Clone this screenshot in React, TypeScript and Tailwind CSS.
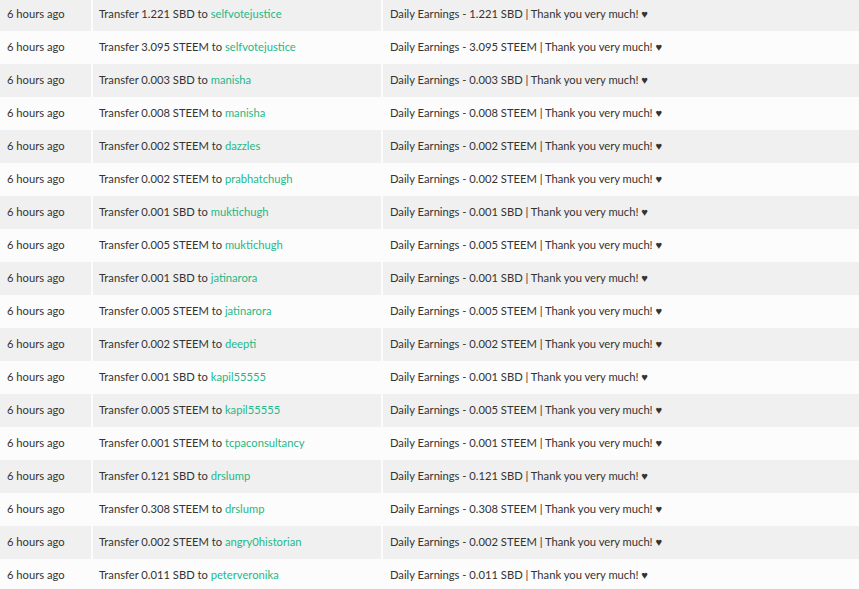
const rows: [string, string, string][] = [
  ["1.221", "SBD", "selfvotejustice"],
  ["3.095", "STEEM", "selfvotejustice"],
  ["0.003", "SBD", "manisha"],
  ["0.008", "STEEM", "manisha"],
  ["0.002", "STEEM", "dazzles"],
  ["0.002", "STEEM", "prabhatchugh"],
  ["0.001", "SBD", "muktichugh"],
  ["0.005", "STEEM", "muktichugh"],
  ["0.001", "SBD", "jatinarora"],
  ["0.005", "STEEM", "jatinarora"],
  ["0.002", "STEEM", "deepti"],
  ["0.001", "SBD", "kapil55555"],
  ["0.005", "STEEM", "kapil55555"],
  ["0.001", "STEEM", "tcpaconsultancy"],
  ["0.121", "SBD", "drslump"],
  ["0.308", "STEEM", "drslump"],
  ["0.002", "STEEM", "angry0historian"],
  ["0.011", "SBD", "peterveronika"],
];

export default function App() {
  return (
    <div className="w-[859px] h-[589px] overflow-hidden bg-[#fcfcfc] text-[#333] text-[11.2px]" style={{ fontFamily: '"Source Sans Pro", Lato, "Noto Sans", sans-serif' }}>
      <div className="-mt-[2px]">
        {rows.map(([amt, cur, to], i) => (
          <div key={i} className={`flex h-[33px] items-center ${i % 2 === 0 ? "bg-[#f0f0f0]" : "bg-[#fcfcfc]"}`}>
            <div className="w-[93px] h-full flex items-center pl-[7px] border-r-2 border-[#fcfcfc]">6 hours ago</div>
            <div className="w-[290px] h-full flex items-center pl-[6px] border-r-2 border-[#fcfcfc]">
              Transfer {amt} {cur} to&nbsp;<span className="text-[#1fb889]">{to}</span>
            </div>
            <div className="flex-1 h-full flex items-center pl-[7px]">
              Daily Earnings - {amt} {cur} | Thank you very much! ♥
            </div>
          </div>
        ))}
      </div>
    </div>
  );
}
